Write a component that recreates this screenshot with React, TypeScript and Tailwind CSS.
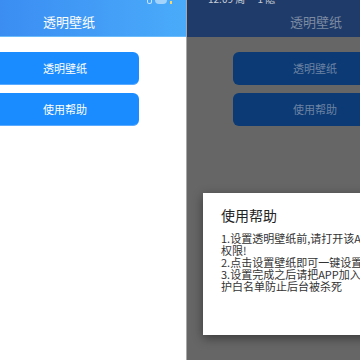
import React from "react";

const font = { fontFamily: '"Noto Sans CJK SC", "Noto Sans", sans-serif' };

export default function App() {
  return (
    <div className="w-[360px] h-[360px] overflow-hidden flex bg-white" style={font}>
      {/* Left phone */}
      <div className="w-[186px] h-full flex flex-col bg-white shrink-0">
        <div className="relative h-[37px] bg-gradient-to-r from-[#3b8df2] to-[#4aabfa] border-b border-[#6bbcfb] flex items-center pl-[43px]">
          <div className="absolute top-0 left-[147px] flex items-center gap-[3px]">
            <div className="w-[5px] h-[4px] rounded-b-full border border-white/70 border-t-0" />
            <div className="w-[12px] h-[4px] rounded-b-sm bg-white/50" />
            <div className="w-[2px] h-[3px] bg-[#f5d76e]" />
          </div>
          <span className="text-white text-[13px] leading-none mt-[6px]">透明壁纸</span>
        </div>
        <div className="flex flex-col gap-[8px] mt-[15px] w-[139px]">
          <div className="h-[33px] rounded-r-md bg-[#1a8cff] border-b border-[#5aaaff] flex items-center pl-[43px] text-white text-[11px]">透明壁纸</div>
          <div className="h-[33px] rounded-r-md bg-[#1a8cff] border-b border-[#5aaaff] flex items-center pl-[43px] text-white text-[11px]">使用帮助</div>
        </div>
      </div>
      {/* divider */}
      <div className="w-[1px] h-full bg-[#a8a8a8] shrink-0" />
      {/* Right phone dimmed */}
      <div className="relative flex-1 h-full flex flex-col bg-[#666666]">
        <div className="relative h-[37px] bg-[#1f3b69] flex items-center pl-[103px]">
          <div className="absolute top-[-6px] left-[21px] text-[#c8cdd6] text-[10px] leading-none">12:09 周一 1 隐</div>
          <span className="text-[#7d8ba3] text-[13px] leading-none mt-[6px]">透明壁纸</span>
        </div>
        <div className="flex flex-col gap-[8px] mt-[15px] ml-[46px]">
          <div className="h-[33px] rounded-l-md bg-[#0b3a74] flex items-center pl-[60px] text-[#6d82a3] text-[11px]">透明壁纸</div>
          <div className="h-[33px] rounded-l-md bg-[#0b3a74] flex items-center pl-[60px] text-[#6d82a3] text-[11px]">使用帮助</div>
        </div>
        <div className="mt-[67px] ml-[16px] h-[142px] bg-white shadow-[0_3px_10px_rgba(0,0,0,0.45)] pl-[18px] pt-[12px] overflow-hidden">
          <div className="text-[#222] text-[14px] leading-[20px] whitespace-nowrap">使用帮助</div>
          <div className="mt-[7px] text-[#333] text-[11px] leading-[12px] whitespace-nowrap">
            <div>1.设置透明壁纸前,请打开该APP存储</div>
            <div>权限!</div>
            <div>2.点击设置壁纸即可一键设置</div>
            <div>3.设置完成之后请把APP加入系统保</div>
            <div>护白名单防止后台被杀死</div>
          </div>
        </div>
      </div>
    </div>
  );
}
